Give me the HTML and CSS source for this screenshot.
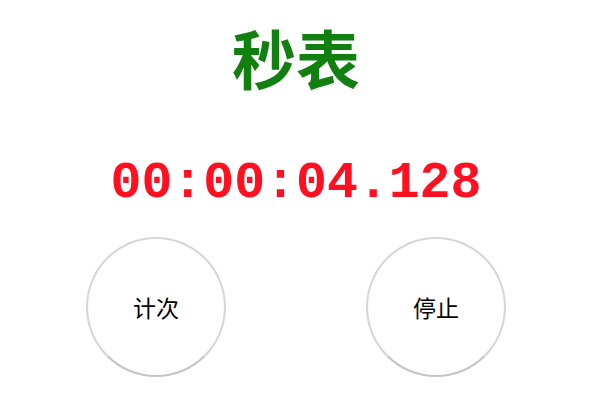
FILE: index.html
```html
<!DOCTYPE html>
<html lang="zh">
<head>
<meta charset="utf-8">
<title>秒表</title>
<link rel="stylesheet" href="styles.css">
</head>
<body>
<main class="watch">
  <h1 class="title">秒表</h1>
  <div class="time">00:00:04.128</div>
  <div class="controls">
    <button class="btn">计次</button>
    <button class="btn">停止</button>
  </div>
</main>
</body>
</html>
```

FILE: styles.css
```css
html, body {
  margin: 0;
  padding: 0;
  background: #ffffff;
}
.watch {
  width: 560px;
  margin-left: 16px;
  text-align: center;
  font-family: "Noto Sans CJK SC", "Noto Sans", sans-serif;
}
.title {
  margin: 0;
  padding-top: 18px;
  font-size: 64px;
  line-height: 76px;
  font-weight: bold;
  color: #118011;
}
.time {
  margin-top: 59px;
  font-family: "Liberation Mono", "Courier New", "Noto Sans CJK SC", monospace;
  font-weight: bold;
  font-size: 51.5px;
  line-height: 60px;
  color: #ff1020;
}
.controls {
  display: flex;
  justify-content: space-around;
  margin-top: 24px;
}
.btn {
  width: 140px;
  height: 140px;
  box-sizing: border-box;
  border-radius: 50%;
  border: 2px solid #d6d6d6;
  border-bottom-color: #c4c4c4;
  background: #ffffff;
  font-family: "Noto Sans CJK SC", sans-serif;
  font-size: 23px;
  color: #000000;
  padding: 0;
}
```
